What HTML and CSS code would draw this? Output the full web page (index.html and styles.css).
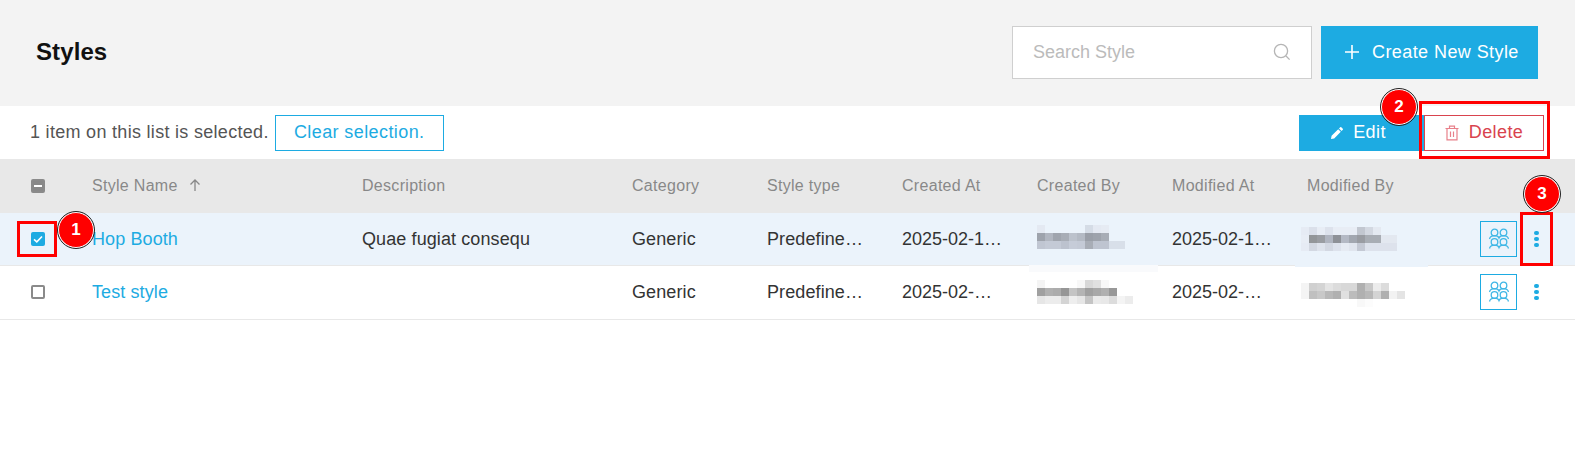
FILE: index.html
```html
<!DOCTYPE html>
<html lang="en">
<head>
    <meta charset="UTF-8">
    <title>Styles</title>
    <link rel="stylesheet" href="styles.css">
</head>
<body>
<div class="page">
    <header class="top">
        <h1>Styles</h1>
        <div class="top-actions">
            <div class="search">
                <span>Search Style</span>
                <svg width="20" height="20" viewBox="0 0 20 20" fill="none" stroke="#b5b5b5" stroke-width="1.3"><circle cx="9" cy="9" r="6.6"/><path d="M14 14l3.6 3.6"/></svg>
            </div>
            <button class="btn-create">
                <svg width="16" height="16" viewBox="0 0 16 16" stroke="#fff" stroke-width="1.6"><path d="M8 1v14M1 8h14"/></svg>
                Create New Style
            </button>
        </div>
    </header>

    <div class="toolbar">
        <span class="selected-text">1 item on this list is selected.</span>
        <button class="btn-clear">Clear selection.</button>
        <div class="toolbar-right">
            <button class="btn-edit">
                <svg width="14" height="14" viewBox="0 0 14 14" fill="#fff"><path d="M1 13l.6-3.2 6.6-6.6 2.6 2.6-6.6 6.6zM9 2.4l1.2-1.2a.8.8 0 0 1 1.1 0l1.5 1.5a.8.8 0 0 1 0 1.1L11.600 5z"/></svg>
                Edit
            </button>
            <button class="btn-delete">
                <svg width="14" height="16" viewBox="0 0 14 16" fill="none" stroke="#e8808a" stroke-width="1.200"><path d="M.5 3.500h13M4.500 3.500V1.200h5v2.300M2 3.500v11.300h10V3.500M5.500 6.500v5.500M8.500 6.500v5.500"/></svg>
                Delete
            </button>
        </div>
    </div>

    <div class="row row-head">
        <div class="cell-check"><span class="box box-mixed"></span></div>
        <div class="cell">Style Name <svg class="sort" width="14" height="14" viewBox="0 0 14 14" fill="none" stroke="#888" stroke-width="1.300"><path d="M7 13V2M2.500 6.500L7 2l4.500 4.500"/></svg></div>
        <div class="cell">Description</div>
        <div class="cell">Category</div>
        <div class="cell">Style type</div>
        <div class="cell">Created At</div>
        <div class="cell">Created By</div>
        <div class="cell">Modified At</div>
        <div class="cell">Modified By</div>
        <div></div>
    </div>

    <div class="row row-selected">
        <div class="cell-check">
            <span class="box box-checked">
                <svg width="14" height="14" viewBox="0 0 14 14" fill="none" stroke="#fff" stroke-width="1.600"><path d="M3 7.300l2.800 2.500L11 4.500"/></svg>
            </span>
        </div>
        <div class="cell link">Hop Booth</div>
        <div class="cell">Quae fugiat consequ</div>
        <div class="cell">Generic</div>
        <div class="cell">Predefine…</div>
        <div class="cell cell-date">2025-02-1…</div>
        <div class="cell"></div>
        <div class="cell cell-date">2025-02-1…</div>
        <div class="cell"></div>
        <div class="cell-actions">
            <button class="btn-group">
                <svg width="22" height="22" viewBox="0 0 22 22" fill="none" stroke="#3fb7e6" stroke-width="1.300"><circle cx="6.500" cy="4.500" r="3.300"/><circle cx="15.500" cy="4.500" r="3.300"/><path d="M1.500 11c.5-2.300 2.500-3.300 5-3.300s4 .8 4.500 2.300c.500-1.500 2-2.300 4.500-2.300s4.500 1 5 3.300"/><circle cx="6.500" cy="14" r="3.300"/><circle cx="15.500" cy="14" r="3.300"/><path d="M1.500 20.500c.5-2.300 2.500-3.300 5-3.300s4 .8 4.500 2.300c.500-1.500 2-2.300 4.500-2.300s4.500 1 5 3.300"/></svg>
            </button>
            <span class="dots"><i></i><i></i><i></i></span>
        </div>
    </div>

    <div class="row row-last">
        <div class="cell-check"><span class="box"></span></div>
        <div class="cell link">Test style</div>
        <div class="cell"></div>
        <div class="cell">Generic</div>
        <div class="cell">Predefine…</div>
        <div class="cell cell-date">2025-02-…</div>
        <div class="cell"></div>
        <div class="cell cell-date">2025-02-…</div>
        <div class="cell"></div>
        <div class="cell-actions">
            <button class="btn-group">
                <svg width="22" height="22" viewBox="0 0 22 22" fill="none" stroke="#3fb7e6" stroke-width="1.300"><circle cx="6.500" cy="4.500" r="3.300"/><circle cx="15.500" cy="4.500" r="3.300"/><path d="M1.500 11c.5-2.300 2.500-3.300 5-3.300s4 .8 4.500 2.300c.500-1.500 2-2.300 4.500-2.300s4.500 1 5 3.300"/><circle cx="6.500" cy="14" r="3.300"/><circle cx="15.500" cy="14" r="3.300"/><path d="M1.500 20.500c.5-2.300 2.500-3.300 5-3.300s4 .8 4.500 2.300c.500-1.500 2-2.300 4.500-2.300s4.500 1 5 3.300"/></svg>
            </button>
            <span class="dots"><i></i><i></i><i></i></span>
        </div>
    </div>

    <!-- blurred names, laid over the table -->
    <svg class="mosaic" width="1575" height="473" viewBox="0 0 1575 473" shape-rendering="crispEdges">
        <rect x="1029" y="265" width="129" height="7" fill="#f9fafc"/>
        <rect x="1295" y="265" width="133" height="2" fill="#ebf3fb"/>

        <g transform="translate(1037 225)">
            <rect x="0" y="0" width="8" height="8" fill="#e4e9f2"/><rect x="48" y="0" width="8" height="8" fill="#d5dce6"/><rect x="56" y="0" width="8" height="8" fill="#e4e9f2"/><rect x="64" y="0" width="8" height="8" fill="#e6ebf3"/>
            <rect x="0" y="8" width="8" height="8" fill="#9ea3ac"/><rect x="8" y="8" width="8" height="8" fill="#b1b6c0"/><rect x="16" y="8" width="8" height="8" fill="#a0a5ae"/><rect x="24" y="8" width="8" height="8" fill="#a8adb6"/><rect x="32" y="8" width="8" height="8" fill="#bcc2cc"/><rect x="40" y="8" width="8" height="8" fill="#b4bac4"/><rect x="48" y="8" width="8" height="8" fill="#9a9fa8"/><rect x="56" y="8" width="8" height="8" fill="#9ea3ac"/><rect x="64" y="8" width="8" height="8" fill="#a8adb6"/>
            <rect x="0" y="16" width="8" height="8" fill="#c0c6d2"/><rect x="8" y="16" width="8" height="8" fill="#c4cad6"/><rect x="16" y="16" width="8" height="8" fill="#c4cad6"/><rect x="24" y="16" width="8" height="8" fill="#bcc2ce"/><rect x="32" y="16" width="8" height="8" fill="#c6ccd8"/><rect x="40" y="16" width="8" height="8" fill="#c4cad6"/><rect x="48" y="16" width="8" height="8" fill="#a8adb6"/><rect x="56" y="16" width="8" height="8" fill="#bec4d0"/><rect x="64" y="16" width="8" height="8" fill="#bec4d0"/><rect x="72" y="16" width="16" height="8" fill="#d8dfe9"/>
        </g>

        <g transform="translate(1037 280)">
            <rect x="0" y="0" width="8" height="8" fill="#f4f4f4"/><rect x="40" y="0" width="8" height="8" fill="#f8f8f8"/><rect x="48" y="0" width="8" height="8" fill="#d8d8d8"/><rect x="56" y="0" width="8" height="8" fill="#e0e0e0"/><rect x="64" y="0" width="8" height="8" fill="#f8f8f8"/>
            <rect x="0" y="8" width="8" height="8" fill="#a0a0a0"/><rect x="8" y="8" width="8" height="8" fill="#b0b0b0"/><rect x="16" y="8" width="8" height="8" fill="#acacac"/><rect x="24" y="8" width="8" height="8" fill="#969696"/><rect x="32" y="8" width="8" height="8" fill="#c4c4c4"/><rect x="40" y="8" width="8" height="8" fill="#b4b4b4"/><rect x="48" y="8" width="8" height="8" fill="#a0a0a0"/><rect x="56" y="8" width="8" height="8" fill="#a8a8a8"/><rect x="64" y="8" width="8" height="8" fill="#b0b0b0"/><rect x="72" y="8" width="8" height="8" fill="#989898"/>
            <rect x="0" y="16" width="8" height="8" fill="#e6e6e6"/><rect x="8" y="16" width="8" height="8" fill="#ececec"/><rect x="16" y="16" width="8" height="8" fill="#ececec"/><rect x="24" y="16" width="8" height="8" fill="#d4d4d4"/><rect x="32" y="16" width="8" height="8" fill="#eeeeee"/><rect x="40" y="16" width="8" height="8" fill="#e6e6e6"/><rect x="48" y="16" width="8" height="8" fill="#c4c4c4"/><rect x="56" y="16" width="8" height="8" fill="#eaeaea"/><rect x="64" y="16" width="8" height="8" fill="#e8e8e8"/><rect x="72" y="16" width="8" height="8" fill="#dcdcdc"/><rect x="80" y="16" width="8" height="8" fill="#f4f4f4"/><rect x="88" y="16" width="8" height="8" fill="#ececec"/>
        </g>

        <g transform="translate(1301 227)">
            <rect x="0" y="0" width="8" height="8" fill="#e6ebf4"/><rect x="8" y="0" width="8" height="8" fill="#dbe0ea"/><rect x="16" y="0" width="8" height="8" fill="#e8edf5"/><rect x="24" y="0" width="8" height="8" fill="#dde2ec"/><rect x="32" y="0" width="24" height="8" fill="#e8edf5"/><rect x="56" y="0" width="8" height="8" fill="#c2c7d0"/><rect x="64" y="0" width="8" height="8" fill="#d3d8e1"/><rect x="72" y="0" width="8" height="8" fill="#e4e9f1"/>
            <rect x="0" y="8" width="8" height="8" fill="#e8edf5"/><rect x="8" y="8" width="8" height="8" fill="#939699"/><rect x="16" y="8" width="8" height="8" fill="#9a9da2"/><rect x="24" y="8" width="8" height="8" fill="#b0b5c0"/><rect x="32" y="8" width="8" height="8" fill="#8e9197"/><rect x="40" y="8" width="8" height="8" fill="#b4b9c4"/><rect x="48" y="8" width="8" height="8" fill="#a2a7b0"/><rect x="56" y="8" width="8" height="8" fill="#999ca2"/><rect x="64" y="8" width="16" height="8" fill="#a8adb4"/><rect x="80" y="8" width="16" height="8" fill="#e3e8f0"/>
            <rect x="0" y="16" width="8" height="8" fill="#e6ebf4"/><rect x="8" y="16" width="8" height="8" fill="#d3d8e2"/><rect x="16" y="16" width="8" height="8" fill="#dee3ec"/><rect x="24" y="16" width="8" height="8" fill="#d3d8e2"/><rect x="32" y="16" width="8" height="8" fill="#dde2ec"/><rect x="40" y="16" width="8" height="8" fill="#e6ebf3"/><rect x="48" y="16" width="8" height="8" fill="#e0e5ee"/><rect x="56" y="16" width="8" height="8" fill="#c4c9d4"/><rect x="64" y="16" width="32" height="8" fill="#dde2ec"/>
        </g>

        <g transform="translate(1301 283)">
            <rect x="0" y="0" width="8" height="8" fill="#f4f4f4"/><rect x="8" y="0" width="8" height="8" fill="#d0d0d0"/><rect x="16" y="0" width="8" height="8" fill="#d4d4d4"/><rect x="24" y="0" width="8" height="8" fill="#e4e4e4"/><rect x="32" y="0" width="8" height="8" fill="#dcdcdc"/><rect x="40" y="0" width="16" height="8" fill="#d8d8d8"/><rect x="56" y="0" width="8" height="8" fill="#b0b0b0"/><rect x="64" y="0" width="8" height="8" fill="#c8c8c8"/><rect x="72" y="0" width="8" height="8" fill="#ececec"/><rect x="80" y="0" width="8" height="8" fill="#dcdcdc"/>
            <rect x="0" y="8" width="8" height="8" fill="#f4f4f4"/><rect x="8" y="8" width="8" height="8" fill="#c0c0c0"/><rect x="16" y="8" width="8" height="8" fill="#c8c8c8"/><rect x="24" y="8" width="8" height="8" fill="#b8b8b8"/><rect x="32" y="8" width="8" height="8" fill="#b0b0b0"/><rect x="40" y="8" width="8" height="8" fill="#e0e0e0"/><rect x="48" y="8" width="8" height="8" fill="#bcbcbc"/><rect x="56" y="8" width="8" height="8" fill="#b0b0b0"/><rect x="64" y="8" width="8" height="8" fill="#b8b8b8"/><rect x="72" y="8" width="8" height="8" fill="#d4d4d4"/><rect x="80" y="8" width="8" height="8" fill="#b0b0b0"/><rect x="88" y="8" width="8" height="8" fill="#f2f2f2"/><rect x="96" y="8" width="8" height="8" fill="#e4e4e4"/>
            <rect x="56" y="16" width="8" height="8" fill="#f8f8f8"/><rect x="64" y="16" width="8" height="8" fill="#fcfcfc"/>
        </g>
    </svg>

    <!-- red guide marks on top of the screenshot -->
    <div class="mark mark-one"></div>
    <div class="mark mark-two"></div>
    <div class="mark mark-three"></div>
    <div class="badge badge-one">1</div>
    <div class="badge badge-two">2</div>
    <div class="badge badge-three">3</div>
</div>
</body>
</html>
```

FILE: styles.css
```css
* {
    box-sizing: border-box;
}

html,
body {
    margin: 0;
    background: #fff;
}

body {
    font-family: "Liberation Sans", Arimo, sans-serif;
    font-size: 18px;
    letter-spacing: .1px;
    color: #333;
    overflow: hidden;
}

button {
    font: inherit;
    letter-spacing: inherit;
    cursor: pointer;
}

.page {
    position: relative;
    width: 1575px;
    height: 473px;
}

.top {
    display: flex;
    align-items: center;
    justify-content: space-between;
    height: 106px;
    padding: 0 37px 2px 36px;
    background: #f3f3f3;
}

.top h1 {
    margin: 0;
    font-size: 24px;
    font-weight: 700;
    letter-spacing: .1px;
    color: #111;
}

.top-actions {
    display: flex;
    gap: 9px;
}

.search {
    display: flex;
    align-items: center;
    justify-content: space-between;
    width: 300px;
    height: 53px;
    padding: 0 19px 0 20px;
    background: #fff;
    border: 1px solid #cfcfcf;
    color: #bbb;
    letter-spacing: 0;
}

.btn-create {
    display: flex;
    align-items: center;
    gap: 12px;
    width: 217px;
    height: 53px;
    padding: 0 0 0 23px;
    background: #1dabe2;
    border: 0;
    color: #fff;
    letter-spacing: .42px;
}

.toolbar {
    display: flex;
    align-items: center;
    height: 53px;
    padding: 0 31px 0 30px;
}

.selected-text {
    color: #555;
    letter-spacing: .3px;
}

.btn-clear {
    width: 169px;
    height: 36px;
    margin-left: 6px;
    padding: 0;
    background: #fff;
    border: 1px solid #1dabe2;
    color: #1dabe2;
    letter-spacing: .41px;
}

.toolbar-right {
    display: flex;
    align-items: center;
    margin-left: auto;
}

.btn-edit,
.btn-delete {
    display: flex;
    align-items: center;
    justify-content: center;
    height: 36px;
    padding: 0;
    letter-spacing: .4px;
}

.btn-edit {
    gap: 9px;
    width: 125px;
    padding-right: 7px;
    background: #1dabe2;
    border: 0;
    color: #fff;
}

.btn-delete {
    gap: 10px;
    width: 120px;
    background: #fff;
    border: 1px solid #d9434e;
    color: #d9434e;
}

.row {
    display: grid;
    grid-template-columns: 92px 270px 270px repeat(6, 135px) 1fr;
    align-items: center;
    height: 53px;
    border-bottom: 1px solid #e8e8e8;
}

.row-head {
    height: 54px;
    background: #e8e8e8;
    color: #888;
    font-size: 16px;
    letter-spacing: .3px;
    border-bottom: 0;
}

.row-selected {
    background: #ebf3fb;
}

.row-last {
    height: 54px;
    padding-bottom: 1px;
}

.cell {
    white-space: nowrap;
    overflow: hidden;
}

.cell-date {
    letter-spacing: 0;
}

.link {
    color: #1dabe2;
}

.sort {
    margin-left: 6px;
    vertical-align: -1px;
}

.cell-check {
    padding-left: 31px;
}

.box {
    display: block;
    position: relative;
    width: 14px;
    height: 14px;
    background: #fff;
    border: 2px solid #8a8a8a;
    border-radius: 2px;
}

.box-mixed {
    background: #888;
}

.box-mixed::after {
    content: "";
    position: absolute;
    left: 1px;
    top: 4px;
    width: 8px;
    height: 2px;
    background: #fff;
}

.box-checked {
    background: #1dabe2;
    border: 0;
}

.box-checked svg {
    display: block;
}

.cell-actions {
    display: flex;
    align-items: center;
    padding-left: 38px;
}

.btn-group {
    display: flex;
    align-items: center;
    justify-content: center;
    width: 37px;
    height: 36px;
    padding: 0;
    background: #fff;
    border: 1px solid #1dabe2;
}

.row-selected .btn-group {
    background: transparent;
}

.dots {
    display: flex;
    flex-direction: column;
    gap: 1.5px;
    margin-left: 17px;
}

.dots i {
    display: block;
    width: 4.500px;
    height: 4.500px;
    background: #1dabe2;
    border-radius: 50%;
}

.mosaic {
    position: absolute;
    left: 0;
    top: 0;
    pointer-events: none;
}

.mark {
    position: absolute;
    border: 3px solid #f00;
}

.mark-one {
    left: 17px;
    top: 221px;
    width: 40px;
    height: 36px;
}

.mark-two {
    left: 1419px;
    top: 101px;
    width: 131px;
    height: 58px;
}

.mark-three {
    left: 1520px;
    top: 212px;
    width: 33px;
    height: 54px;
}

.badge {
    position: absolute;
    width: 36px;
    height: 36px;
    background: #f00;
    border: 1px solid #fff;
    border-radius: 50%;
    outline: 1px solid #222;
    color: #fff;
    font-size: 17px;
    font-weight: 700;
    letter-spacing: 0;
    line-height: 34px;
    text-align: center;
}

.badge-one {
    left: 58px;
    top: 212px;
}

.badge-two {
    left: 1381px;
    top: 89px;
}

.badge-three {
    left: 1524px;
    top: 176px;
}
```
